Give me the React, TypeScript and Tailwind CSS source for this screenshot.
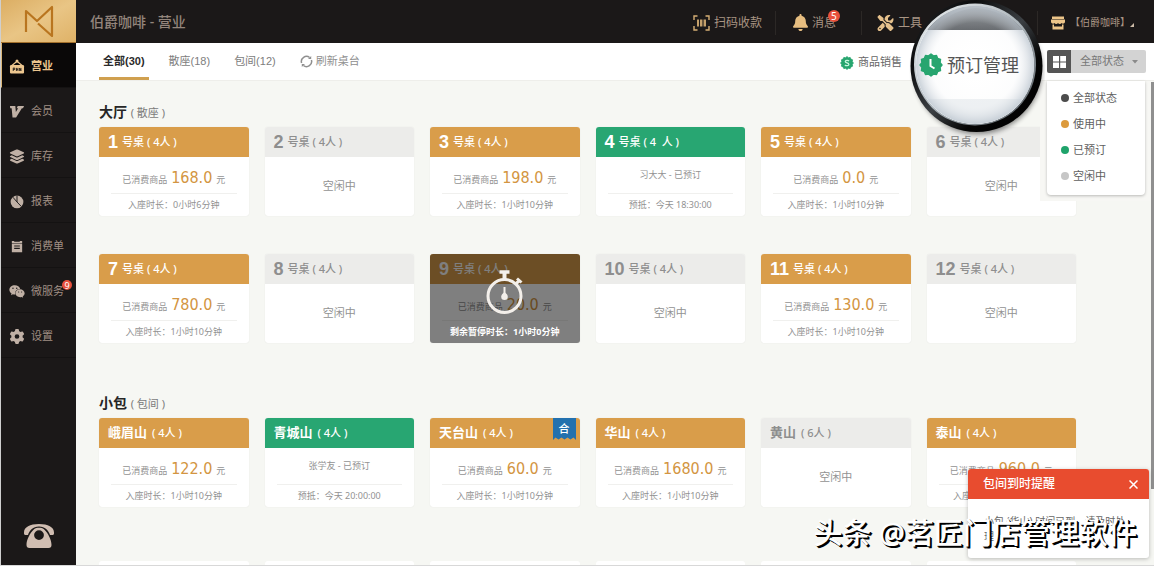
import { ReactNode } from "react";
import clsx from "clsx";
import { FaBell, FaGear, FaLayerGroup, FaScrewdriverWrench, FaWeixin } from "react-icons/fa6";

type IconProps = { className?: string };

const Logo = ({ className }: IconProps) => (
  <svg viewBox="0 0 30 32" className={className} fill="none" stroke="#b9751f" strokeWidth="2.2" strokeLinejoin="round">
    <path d="M2 27 V6 L13 16 L28 2 V31 L14 18.5" />
  </svg>
);

const OpenSign = ({ className }: IconProps) => (
  <svg viewBox="0 0 16 16" className={className} fill="none">
    <path d="M2.5 7 L8 2.5 L13.5 7" stroke="currentColor" strokeWidth="1.3" />
    <circle cx="8" cy="2" r="1.6" fill="currentColor" />
    <rect x="0.5" y="6.5" width="15" height="9" rx="1.2" fill="currentColor" />
    <path d="M4 9.5 V12.8 M4 9.7 H5.6 V11.2 H4 M7.4 9.5 V12.8 M7.4 11 H9 M9 9.5 V12.8 M10.8 12.8 V9.7 L12.2 12.6 V9.5" stroke="#1a1512" strokeWidth="0.9" />
  </svg>
);

const Member = ({ className }: IconProps) => (
  <svg viewBox="0 0 16 16" className={className}>
    <path d="M0.5 2 H6.2 L6.8 8.4 L9.2 4.6 H7.6 L8.8 2 H15.5 L14.4 4.6 H13.2 L7 14.5 H3.2 L2.3 4.6 H0.8 Z" fill="currentColor" />
  </svg>
);

const Pie = ({ className }: IconProps) => (
  <svg viewBox="0 0 16 16" className={className}>
    <circle cx="8" cy="8.5" r="6.8" fill="currentColor" />
    <path d="M8 8.5 V1.5 M8 8.5 L12.8 13.5 M8 8.5 L3.6 3.4" stroke="#1b1818" strokeWidth="1" fill="none" />
  </svg>
);

const Receipt = ({ className }: IconProps) => (
  <svg viewBox="0 0 16 16" className={className}>
    <path d="M2.5 2 H5 V3 H11 V2 H13.5 V4.2 H2.5 Z M2.5 4.8 H13.5 V14 H2.5 Z" fill="currentColor" />
    <path d="M5 7.5 H11 M5 10 H11" stroke="#1b1818" strokeWidth="1.2" />
  </svg>
);

const Telephone = ({ className }: IconProps) => (
  <svg viewBox="0 0 30 24" className={className} fill="currentColor">
    <path d="M0 8.500 C0 3 6 0 15 0 C24 0 30 3 30 8.500 V9.500 C30 10.500 29 11 28 11 H26 C24.500 6.500 21 2.600 15 2.600 C9 2.600 5.500 6.500 4 11 H2 C1 11 0 10.500 0 9.500 Z" />
    <path fillRule="evenodd" d="M10 5.200 C12.500 3.400 17.500 3.400 20 5.200 C24.500 9.500 27.500 16 27.500 21 C27.500 23 26.500 24 24.500 24 H5.500 C3.500 24 2.500 23 2.500 21 C2.500 16 5.500 9.500 10 5.200 Z M15 6.200 A4.900 4.900 0 1 0 15 16 A4.900 4.900 0 1 0 15 6.200 Z" />
  </svg>
);

const ScanCode = ({ className }: IconProps) => (
  <svg viewBox="0 0 17 16" className={className} fill="none" stroke="currentColor">
    <path d="M4.5 1 H1 V5 M12.5 1 H16 V5 M1 11 V15 H4.5 M16 11 V15 H12.5" strokeWidth="1.4" />
    <path d="M5 4.5 V11.5 M8 4.5 V11.5 M12 4.5 V11.5" strokeWidth="1.8" />
    <path d="M10 4.5 V11.5" strokeWidth="0.8" />
  </svg>
);

const Shop = ({ className }: IconProps) => (
  <svg viewBox="0 0 14 14" className={className} fill="currentColor">
    <path d="M1 0.5 H13 V3 H1 Z" />
    <path d="M0 3.5 H14 V6 A2 2 0 0 1 10.6 7 A2.2 2.2 0 0 1 7 7 A2.2 2.2 0 0 1 3.4 7 A2 2 0 0 1 0 6 Z" />
    <path d="M1.5 8.5 H3 V10.5 H11 V8.5 H12.5 V13.5 H1.5 Z" />
  </svg>
);

const Refresh = ({ className }: IconProps) => (
  <svg viewBox="0 0 13 13" className={className} fill="none" stroke="currentColor" strokeWidth="1.5">
    <path d="M1.6 8 A5.1 5.1 0 0 1 9.6 2.5" />
    <path d="M11.4 5 A5.1 5.1 0 0 1 3.4 10.5" />
    <path d="M8 4 H11.2 V1 Z M5 9 H1.8 V12 Z" fill="currentColor" stroke="none" />
  </svg>
);

const Stopwatch = ({ className }: IconProps) => (
  <svg viewBox="0 0 38 44" className={className} fill="none" stroke="#f3efea" strokeWidth="3">
    <circle cx="18.5" cy="26" r="16.5" />
    <path d="M13.5 2 H23.5" strokeWidth="3.6" />
    <path d="M18.5 3 V9" strokeWidth="4" />
    <path d="M29 14.5 L33 11" strokeWidth="3" />
    <path d="M31 8.500 L35.5 12.5" strokeWidth="3" />
    <path d="M18.5 17 V26" strokeWidth="2" />
    <path d="M18.5 22 C20.5 23.5 21.8 25 21.8 26.8 A3.3 3.3 0 0 1 15.2 26.8 C15.2 25 16.5 23.5 18.5 22 Z" fill="#f3efea" stroke="none" />
  </svg>
);

const sealPoints = Array.from({ length: 24 }, (_, i) => {
  const r = i % 2 ? 9.4 : 11;
  const a = (i * Math.PI) / 12;
  return `${12 + r * Math.sin(a)},${12 - r * Math.cos(a)}`;
}).join(" ");

const Seal = ({ className, children }: { className?: string; children: ReactNode }) => (
  <svg viewBox="0 0 24 24" className={className}>
    <polygon points={sealPoints} fill="#27a56f" stroke="#27a56f" strokeWidth="1.4" strokeLinejoin="round" />
    {children}
  </svg>
);

const menu = [
  { label: "营业", icon: OpenSign, active: true },
  { label: "会员", icon: Member },
  { label: "库存", icon: FaLayerGroup },
  { label: "报表", icon: Pie },
  { label: "消费单", icon: Receipt },
  { label: "微服务", icon: FaWeixin, badge: 9 },
  { label: "设置", icon: FaGear },
];

const tabs = ["全部(30)", "散座(18)", "包间(12)"];

const states = [
  { label: "全部状态", dot: "bg-[#4c4c4c]" },
  { label: "使用中", dot: "bg-[#dc9a3c]" },
  { label: "已预订", dot: "bg-[#1fa36b]" },
  { label: "空闲中", dot: "bg-[#c6c6c6]" },
];

type Table = {
  no?: string;
  name?: string;
  seats?: string;
  price?: string;
  time?: string;
  guest?: string;
  arrive?: string;
  merged?: boolean;
  paused?: string;
};

const hall: Table[] = [
  { no: "1", price: "168.0", time: "0小时6分钟" },
  { no: "2" },
  { no: "3", price: "198.0", time: "1小时10分钟" },
  { no: "4", seats: "( 4  人 )", guest: "习大大 - 已预订", arrive: "今天 18:30:00" },
  { no: "5", price: "0.0", time: "1小时10分钟" },
  { no: "6" },
  { no: "7", price: "780.0", time: "1小时10分钟" },
  { no: "8" },
  { no: "9", price: "20.0", paused: "1小时0分钟" },
  { no: "10" },
  { no: "11", price: "130.0", time: "1小时10分钟" },
  { no: "12" },
];

const rooms: Table[] = [
  { name: "峨眉山", price: "122.0", time: "1小时10分钟" },
  { name: "青城山", guest: "张学友 - 已预订", arrive: "今天 20:00:00" },
  { name: "天台山", price: "60.0", time: "1小时10分钟", merged: true },
  { name: "华山", price: "1680.0", time: "1小时10分钟" },
  { name: "黄山", seats: "( 6人 )" },
  { name: "泰山", price: "960.0", time: "1小时10分钟" },
];

function TableCard({ table }: { table: Table }) {
  const { no, name, seats = "( 4人 )", price, time, guest, arrive, merged, paused } = table;
  return (
    <article className="relative overflow-hidden rounded-[3px] bg-white shadow-[0_0_1px_#dcdcd6]">
      <h3
        className={clsx(
          "flex h-[30px] items-center px-[9px]",
          price && "bg-[#d99d4a] text-white",
          guest && "bg-[#28a672] text-white",
          !price && !guest && "bg-[#ececea] text-[#8e8e8e]",
          name ? "gap-[5px]" : "gap-1"
        )}
      >
        {no ? (
          <span className="font-['Liberation_Sans'] text-[18px] leading-none font-bold">{no}</span>
        ) : (
          <span className="text-[13px] font-bold">{name}</span>
        )}
        <span className="text-[11px] font-medium whitespace-pre">
          {no && "号桌 "}
          {seats}
        </span>
      </h3>

      {!price && !guest && (
        <p className="flex h-[59px] items-center justify-center text-[11px] text-[#929292]">空闲中</p>
      )}

      {(price || guest) && (
        <div className="px-3 text-center text-[9px] text-[#929292]">
          {price ? (
            <p className="h-[37px] border-b border-[#f0f0ee] leading-[42px]">
              已消费商品
              <strong className="mx-1 font-['DejaVu_Sans_Condensed','Noto_Sans'] text-[16px] font-normal text-[#d39541]">
                {price}
              </strong>
              元
            </p>
          ) : (
            <p className="h-[37px] border-b border-[#f0f0ee] leading-9">{guest}</p>
          )}
          <p className="h-[22px] leading-[22px]">
            {time && `入座时长：${time}`}
            {arrive && `预抵：${arrive}`}
          </p>
        </div>
      )}

      {merged && (
        <span className="absolute top-0 right-1 flex h-[22px] w-[23px] items-center justify-center text-[11px] font-medium text-white">
          <svg viewBox="0 0 23 22" className="absolute inset-0 h-full w-full">
            <path d="M0 0 H23 V22 L20.5 19.5 L17.5 21.5 L14.5 19.5 L11.5 21.5 L8.5 19.5 L5.5 21.5 L2.5 19.5 L0 22 Z" fill="#2371ae" />
          </svg>
          <span className="relative">合</span>
        </span>
      )}

      {paused && (
        <div className="absolute inset-0 flex flex-col items-center justify-end bg-black/50 text-white">
          <Stopwatch className="h-[44px] w-[38px]" />
          <p className="mt-[7px] h-[22px] text-[9px] leading-[22px] font-bold">剩余暂停时长：{paused}</p>
        </div>
      )}
    </article>
  );
}

function Area({ title, kind, tables }: { title: string; kind: string; tables: Table[] }) {
  return (
    <section>
      <h2 className="mb-[3px] h-6 text-[14px] leading-6 font-bold text-[#262626]">
        {title} <span className="text-[11px] font-normal text-[#7b7b7b]">( {kind} )</span>
      </h2>
      <div className="grid grid-cols-6 gap-x-4 gap-y-[38px]">
        {tables.map((t) => (
          <TableCard key={t.no ?? t.name} table={t} />
        ))}
      </div>
    </section>
  );
}

function Sidebar() {
  return (
    <aside className="flex w-[76px] shrink-0 flex-col border-l border-[#cfcfcf] bg-[#1b1818]">
      <a
        href="#home"
        aria-label="首页"
        className="flex h-[43px] items-center justify-center border-b border-[#a3702c] bg-gradient-to-br from-[#dcae63] via-[#e9c585] to-[#dfb267]"
      >
        <Logo className="h-8 w-[30px]" />
      </a>
      <nav>
        {menu.map(({ label, icon: Icon, active, badge }) => (
          <a
            key={label}
            href="#menu"
            className={clsx(
              "flex h-[45px] items-center gap-[6px] border-b border-l border-b-[#141212] pt-[3px] pl-[7px] text-[11px]",
              active ? "border-l-[#d9b578] bg-[#0a0808] font-bold text-[#ecc68f]" : "border-l-transparent text-[#a08f84]"
            )}
          >
            <Icon className={clsx("h-[15px] w-4 shrink-0", !active && "text-[#c0b0a5]")} />
            <span className="relative">
              {label}
              {badge && (
                <span className="absolute -top-[3px] -right-2 flex h-[10px] w-[10px] items-center justify-center rounded-full bg-[#e8513c] text-[9px] leading-none text-white">
                  {badge}
                </span>
              )}
            </span>
          </a>
        ))}
      </nav>
      <button type="button" aria-label="电话" className="mx-auto mt-auto mb-[17px] text-[#d0bdb1]">
        <Telephone className="h-6 w-[30px]" />
      </button>
    </aside>
  );
}

function TopBar() {
  return (
    <header className="flex h-[43px] shrink-0 items-center justify-between bg-[#1b1818] pl-[14px] text-[12px] text-[#a99584]">
      <h1 className="text-[14px] font-medium text-[#93857c]">伯爵咖啡 - 营业</h1>
      <div className="flex items-center pt-[2px]">
        <button type="button" className="flex h-6 items-center gap-1 pr-[13px]">
          <ScanCode className="h-4 w-[17px] text-[#d6ae74]" />
          扫码收款
        </button>
        <button type="button" className="flex h-6 items-center gap-1 border-l border-[#2c2826] pr-[25px] pl-[17px]">
          <FaBell className="h-[17px] w-[15px] text-[#e6bd80]" />
          <span className="relative">
            消息
            <span className="absolute -top-1 -right-1 flex h-3 w-3 items-center justify-center rounded-full bg-[#e8513c] text-[10px] leading-none text-white">
              5
            </span>
          </span>
        </button>
        <button type="button" className="flex h-6 items-center gap-1 border-l border-[#2c2826] pr-[115px] pl-[15px]">
          <FaScrewdriverWrench className="h-4 w-[17px] text-[#e6c18c]" />
          工具
        </button>
        <button type="button" className="flex h-6 items-center border-l border-[#2c2826] pr-5 pl-[13px] text-[10px]">
          <Shop className="mr-[5px] h-[14px] w-[14px] text-[#edc589]" />
          【伯爵咖啡】
          <svg viewBox="0 0 4 4" className="mt-1 h-1 w-1">
            <path d="M4 0 V4 H0 Z" fill="#cdbba8" />
          </svg>
        </button>
      </div>
    </header>
  );
}

function Toolbar() {
  return (
    <div className="flex h-[38px] shrink-0 items-center justify-between border-b border-[#eeeeea] bg-white pr-2 pl-[23px] text-[11px] text-[#7d7d7d]">
      <div className="flex h-full gap-4 font-['Liberation_Sans','Noto_Sans_CJK_SC',sans-serif]">
        {tabs.map((tab, i) => (
          <button
            key={tab}
            type="button"
            className={clsx("h-full border-b-[3px] px-1 pt-[3px]", i === 0 ? "border-[#d0a04f] font-bold text-[#2b2b2b]" : "border-transparent")}
          >
            {tab}
          </button>
        ))}
        <button type="button" className="flex items-center gap-[3px] pl-1 text-[#8f8f8f]">
          <Refresh className="h-[13px] w-[13px]" />
          刷新桌台
        </button>
      </div>
      <div className="flex items-center">
        <button type="button" className="mr-[145px] flex items-center gap-1 pt-[2px] text-[#666]">
          <Seal className="h-[14px] w-[14px]">
            <path d="M15.5 8.5 C14 6.8 9 7 9 9.6 C9 12.4 15.2 11.4 15.2 14.4 C15.2 17.2 10 17.2 8.4 15.4" fill="none" stroke="#c5f5dc" strokeWidth="2.2" />
          </Seal>
          商品销售
        </button>
        <button type="button" aria-label="网格" className="flex h-[23px] w-6 items-center justify-center rounded-l-[2px] bg-[#555]">
          <svg viewBox="0 0 13 12" className="h-3 w-[13px]" fill="#fff">
            <path d="M0 0 H6 V5.4 H0 Z M7.2 0 H13 V5.4 H7.2 Z M0 6.6 H6 V12 H0 Z M7.2 6.6 H13 V12 H7.2 Z" />
          </svg>
        </button>
        <div className="relative">
          <select aria-label="状态" className="h-[23px] w-[75px] appearance-none rounded-r-[2px] bg-[#d3d3d3] pl-[9px] text-[11px] text-[#777]">
            {states.map((s) => (
              <option key={s.label}>{s.label}</option>
            ))}
          </select>
          <svg viewBox="0 0 6 4" className="pointer-events-none absolute top-[10px] right-2 h-1 w-[6px]">
            <path d="M0 0 H6 L3 3.5 Z" fill="#8a8a8a" />
          </svg>
        </div>
      </div>
    </div>
  );
}

const StateMenu = () => (
  <div className="absolute top-[81px] right-[3px] bg-[#f7f7f4] pr-[6px] pb-[6px] pl-[7px]">
    <ul className="w-[98px] rounded-b-[4px] bg-white pt-1 pb-[6px] pl-[14px] shadow-[0_1px_3px_#00000040]">
      {states.map((s) => (
        <li key={s.label} className="flex h-[26px] items-center gap-1 text-[11px] text-[#606060]">
          <span className={clsx("h-2 w-2 rounded-full", s.dot)} />
          {s.label}
        </li>
      ))}
    </ul>
  </div>
);

const Magnifier = () => (
  <div className="absolute top-0 right-[109px] h-[138px] w-[136px]">
    <svg viewBox="0 0 136 138" className="absolute inset-0 h-full w-full">
      <defs>
        <linearGradient id="rim" x1="0" y1="0" x2="1" y2="1">
          <stop offset="0" stopColor="#2a2c2e" />
          <stop offset="0.25" stopColor="#0b0c0d" />
          <stop offset="0.5" stopColor="#3c4044" />
          <stop offset="0.7" stopColor="#050505" />
          <stop offset="1" stopColor="#000" />
        </linearGradient>
        <linearGradient id="sheen" x1="0" y1="0" x2="1" y2="1">
          <stop offset="0" stopColor="#eef2f4" />
          <stop offset="0.5" stopColor="#aeb7bd" />
          <stop offset="1" stopColor="#4b5258" />
        </linearGradient>
        <linearGradient id="cap" x1="0" y1="0" x2="0" y2="1">
          <stop offset="0" stopColor="#c4c9cd" />
          <stop offset="0.5" stopColor="#8b8f93" />
          <stop offset="1" stopColor="#4c4f52" />
        </linearGradient>
        <radialGradient id="glass" cx="0.5" cy="0.5" r="0.5">
          <stop offset="0" stopColor="#fff" stopOpacity="0" />
          <stop offset="0.72" stopColor="#e3e7ec" stopOpacity="0.1" />
          <stop offset="1" stopColor="#b9c3cd" stopOpacity="0.75" />
        </radialGradient>
        <filter id="soft" x="-20%" y="-20%" width="140%" height="140%">
          <feGaussianBlur stdDeviation="2.5" />
        </filter>
        <clipPath id="lens">
          <circle cx="66" cy="65" r="59" />
        </clipPath>
      </defs>
      <circle cx="69" cy="70" r="64" fill="#000" opacity="0.45" filter="url(#soft)" />
      <circle cx="67.5" cy="66" r="66" fill="url(#rim)" />
      <circle cx="66" cy="64.5" r="61" fill="url(#sheen)" />
      <g clipPath="url(#lens)">
        <rect width="136" height="138" fill="#fff" />
        <rect width="136" height="30" fill="url(#cap)" />
        <path d="M26 30 Q40 10 67 8 Q96 10 110 30 Z" fill="#70757a" opacity="0.45" />
        <rect y="99" width="136" height="40" fill="#eef1f3" />
        <circle cx="66" cy="65" r="59" fill="url(#glass)" />
      </g>
    </svg>
    <button type="button" className="absolute inset-x-0 top-[50px] flex items-center gap-1 pl-[10px] text-[18px] leading-[30px] text-[#555]">
      <Seal className="h-6 w-6">
        <path d="M11.5 6 V13 L15.5 15.5" fill="none" stroke="#fff" strokeWidth="2" />
      </Seal>
      预订管理
    </button>
  </div>
);

const Toast = () => (
  <div role="alert" className="absolute right-[5px] bottom-[7px] w-[181px] rounded-[3px] bg-white shadow-[0_1px_4px_#00000040]">
    <div className="flex h-[30px] items-center justify-between rounded-t-[3px] bg-[#e84c2f] pr-[11px] pl-[15px] text-[12px] font-medium text-white">
      包间到时提醒
      <button type="button" aria-label="关闭">
        <svg viewBox="0 0 9 9" className="h-[9px] w-[9px]" stroke="#fff" strokeWidth="1.5">
          <path d="M0.5 0.5 L8.5 8.5 M8.5 0.5 L0.5 8.5" />
        </svg>
      </button>
    </div>
    <p className="h-[59px] px-4 pt-[15px] text-[10px] leading-[15px] text-[#666]">小包 (华山) 时间已到，请及时处理</p>
  </div>
);

export default function App() {
  return (
    <div className="relative flex h-screen overflow-hidden border-b border-[#d8d8d8] bg-[#f6f7f3] font-['Noto_Sans','Noto_Sans_CJK_SC',sans-serif]">
      <Sidebar />
      <div className="flex min-w-0 flex-1 flex-col">
        <TopBar />
        <Toolbar />
        <main className="flex min-h-0 flex-1 justify-between overflow-hidden">
          <div className="flex-1 pt-[19px] pr-[75px] pl-[23px]">
            <Area title="大厅" kind="散座" tables={hall} />
            <div className="mt-12">
              <Area title="小包" kind="包间" tables={rooms} />
            </div>
            <div className="mt-[54px] grid grid-cols-6 gap-x-4">
              {rooms.map((r) => (
                <div key={r.name} className="h-[89px] rounded-[3px] bg-white" />
              ))}
            </div>
          </div>
          <div className="mt-px h-[84%] w-[3px] bg-[#8f8f8f]" />
        </main>
      </div>
      <StateMenu />
      <Magnifier />
      <Toast />
      <p className="pointer-events-none absolute right-[17px] bottom-2 text-[29px] leading-[48px] font-medium whitespace-nowrap text-white [text-shadow:1px_1px_0_#000,2px_2px_0_#000]">
        头条 @茗匠门店管理软件
      </p>
    </div>
  );
}
